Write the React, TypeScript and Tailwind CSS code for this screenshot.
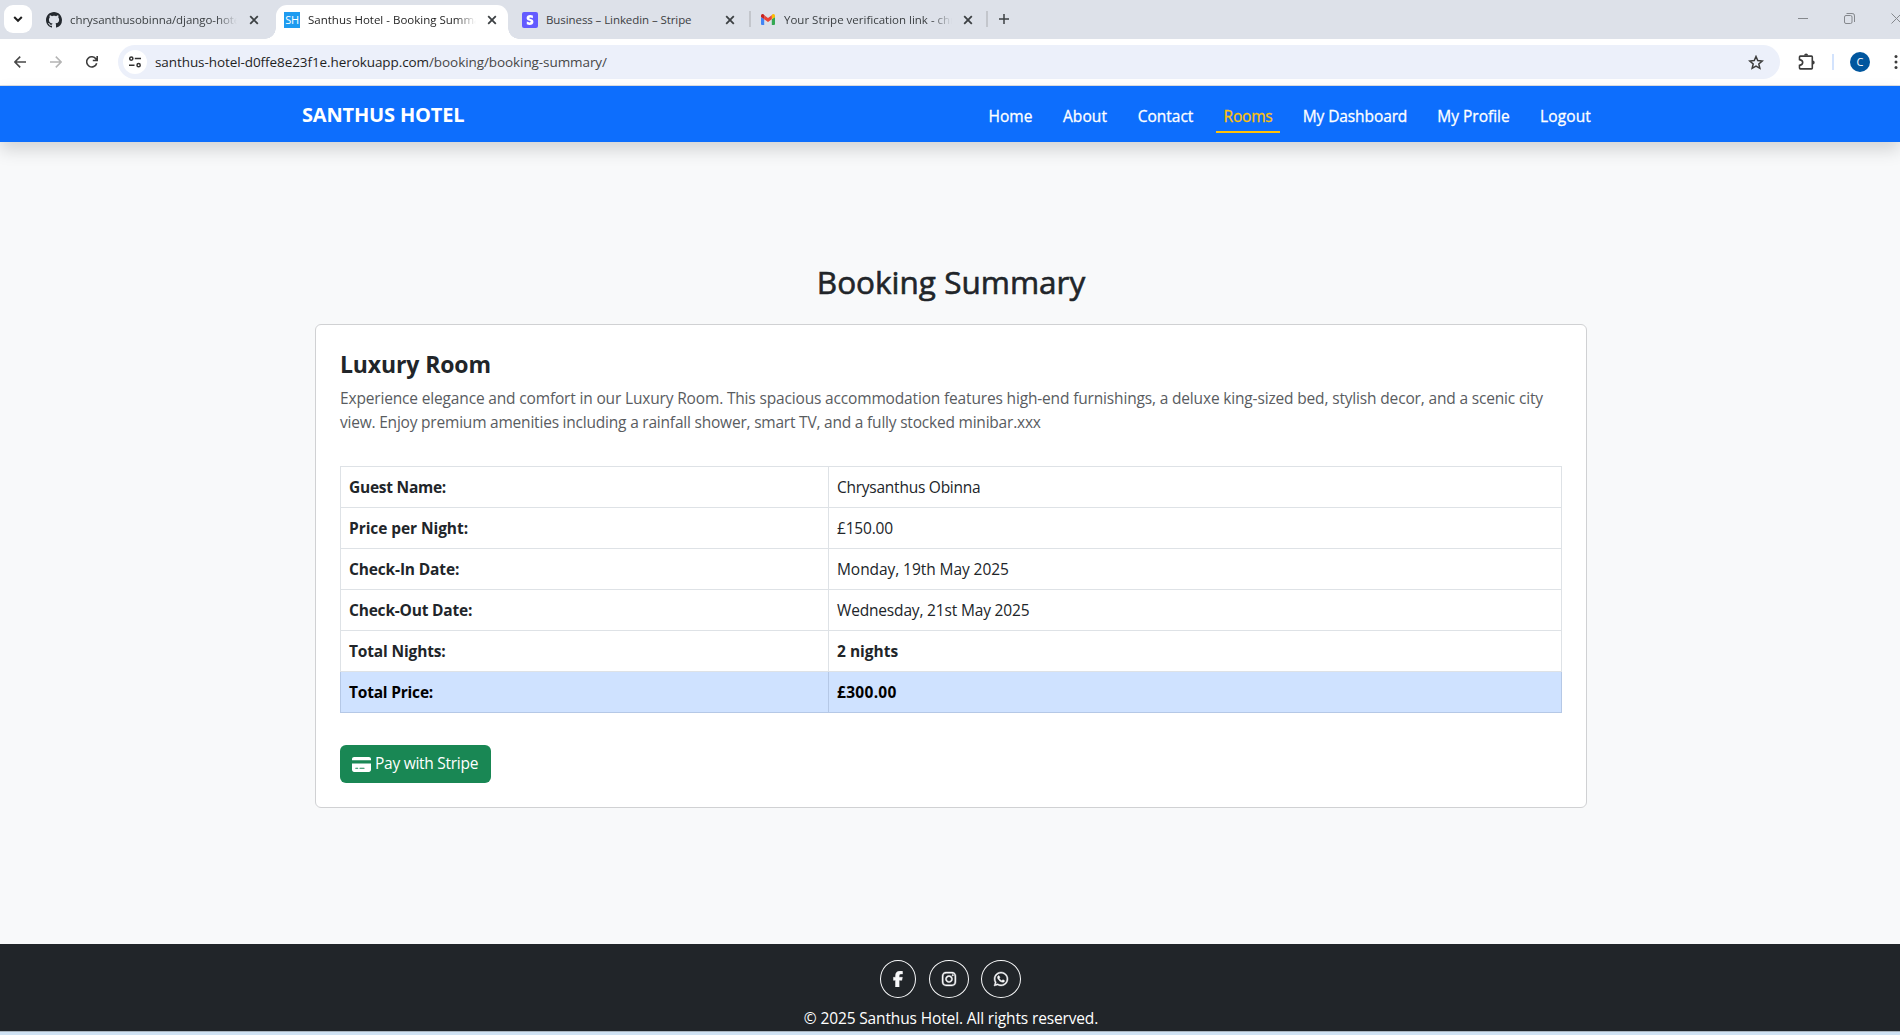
import type { ReactNode } from "react";
import { FaCreditCard, FaFacebookF, FaInstagram, FaWhatsapp } from "react-icons/fa6";

function CloseIcon() {
  return (
    <svg className="h-2.5 w-2.5 shrink-0" viewBox="0 0 10 10" fill="none" stroke="#3c4043" strokeWidth="1.8">
      <path d="M1.2 1.2 8.8 8.8M8.8 1.2 1.2 8.8" />
    </svg>
  );
}

function Tab({ icon, title, className, textClass, fade }: { icon: ReactNode; title: string; className: string; textClass: string; fade: string }) {
  return (
    <div className={`flex shrink-0 items-center ${className}`}>
      {icon}
      <div className={`h-5 overflow-hidden text-[11.5px] leading-5 whitespace-nowrap ${textClass} ${fade}`}>{title}</div>
      <CloseIcon />
    </div>
  );
}

const FADE = "[mask-image:linear-gradient(to_right,black_88%,transparent)]";

function GithubIcon() {
  return (
    <svg className="h-4 w-4 shrink-0" viewBox="0 0 16 16" fill="#24292f">
      <path d="M8 0C3.58 0 0 3.58 0 8c0 3.54 2.29 6.53 5.47 7.59.4.07.55-.17.55-.38 0-.19-.01-.82-.01-1.49-2.01.37-2.53-.49-2.69-.94-.09-.23-.48-.94-.82-1.13-.28-.15-.68-.52-.01-.53.63-.01 1.08.58 1.23.82.72 1.21 1.87.87 2.33.66.07-.52.28-.87.51-1.07-1.78-.2-3.64-.89-3.64-3.95 0-.87.31-1.59.82-2.15-.08-.2-.36-1.02.08-2.12 0 0 .67-.21 2.2.82.64-.18 1.32-.27 2-.27s1.36.09 2 .27c1.53-1.04 2.2-.82 2.2-.82.44 1.1.16 1.92.08 2.12.51.56.82 1.27.82 2.15 0 3.07-1.87 3.75-3.65 3.95.29.25.54.73.54 1.48 0 1.07-.01 1.93-.01 2.2 0 .21.15.46.55.38A8.01 8.01 0 0 0 16 8c0-4.42-3.58-8-8-8z" />
    </svg>
  );
}

function StripeIcon() {
  return (
    <svg className="h-4 w-4 shrink-0" viewBox="0 0 16 16">
      <rect width="16" height="16" rx="2" fill="#635bff" />
      <path fill="#fff" d="M7.3 6.1c0-.4.35-.57.9-.57.82 0 1.85.25 2.67.7V3.5A7 7 0 0 0 8.2 3C6 3 4.6 4.15 4.6 6.05c0 2.98 4.1 2.5 4.1 3.78 0 .5-.43.65-1.02.65-.88 0-2-.37-2.9-.86v2.75c1 .42 1.98.6 2.9.6 2.2 0 3.73-1.07 3.73-3.03C11.4 6.75 7.3 7.3 7.3 6.1z" />
    </svg>
  );
}

function GmailIcon() {
  return (
    <svg className="h-[11px] w-3.5 shrink-0" viewBox="0 0 14 11">
      <path fill="#4285f4" d="M1 11h2.2V5.2L0 2.9V10a1 1 0 0 0 1 1z" />
      <path fill="#34a853" d="M10.8 11H13a1 1 0 0 0 1-1V2.9l-3.2 2.3z" />
      <path fill="#fbbc04" d="M10.8 1.2v4L14 2.9V1.6C14 .2 12.4-.5 11.3.4z" />
      <path fill="#ea4335" d="M3.2 5.2v-4L7 4.1l3.8-2.9v4L7 8.1z" />
      <path fill="#c5221f" d="M0 1.6v1.3l3.2 2.3v-4L2.7.4C1.6-.5 0 .2 0 1.6z" />
    </svg>
  );
}

function BrowserChrome() {
  return (
    <div className="shrink-0 text-[#3c4043]">
      <div className="flex h-[39px] overflow-hidden bg-[#dde1e9]">
        <div className="mt-[5px] ml-1 flex h-7 w-7 shrink-0 items-center justify-center rounded-[9px] bg-white">
          <svg className="h-2 w-2.5" viewBox="0 0 10 8" fill="none" stroke="#1f1f1f" strokeWidth="2">
            <path d="M1.2 2 5 5.8 8.8 2" />
          </svg>
        </div>
        <Tab
          icon={<GithubIcon />}
          title="chrysanthusobinna/django-hotel"
          className="w-[227px] pl-[14px]"
          textClass="mr-3 ml-2 w-[168px] tracking-[-0.06px]"
          fade={FADE}
        />
        <div className="relative mt-[5px] ml-[17px] flex h-[34px] w-[232px] shrink-0 items-center rounded-t-[11px] bg-white text-[#1f1f1f]">
          <span className="absolute bottom-0 -left-[11px] h-[11px] w-[11px] bg-[radial-gradient(circle_at_0_0,transparent_10.5px,white_11px)]" />
          <span className="absolute -right-[11px] bottom-0 h-[11px] w-[11px] bg-[radial-gradient(circle_at_100%_0,transparent_10.5px,white_11px)]" />
          <Tab
            icon={<span className="flex h-4 w-4 shrink-0 items-center justify-center bg-[#1e9bf0] text-[11px] leading-4 tracking-[-0.3px] text-white">SH</span>}
            title="Santhus Hotel - Booking Summary"
            className="-mt-[5px] pl-2"
            textClass="mr-[11px] ml-2 w-[168px]"
            fade={FADE}
          />
        </div>
        <Tab
          icon={<StripeIcon />}
          title="Business – Linkedin – Stripe"
          className="w-[241px] pl-[14px]"
          textClass="mr-[11px] ml-2 w-[168px] tracking-[-0.08px]"
          fade=""
        />
        <div className="mt-[11px] h-4 w-0.5 shrink-0 bg-[#c3c6cc]" />
        <Tab
          icon={<GmailIcon />}
          title="Your Stripe verification link - chrysanthus"
          className="w-[235px] pl-[10px]"
          textClass="mr-[11px] ml-[9px] w-[168px]"
          fade={FADE}
        />
        <div className="mt-[11px] h-4 w-0.5 shrink-0 bg-[#c3c6cc]" />
        <svg className="mt-3.5 ml-[11px] h-2.5 w-2.5 shrink-0" viewBox="0 0 10 10" fill="none" stroke="#3c4043" strokeWidth="1.5">
          <path d="M5 0v10M0 5h10" />
        </svg>
        <div className="mt-[13px] -mr-0.5 ml-auto flex gap-9 text-[#85888d]">
          <svg className="h-[11px] w-2.5" viewBox="0 0 10 11" stroke="currentColor">
            <path d="M0 5.5h10" />
          </svg>
          <svg className="h-[11px] w-[11px]" viewBox="0 0 11 11" fill="none" stroke="currentColor">
            <rect x=".5" y="2.5" width="7.5" height="8" rx="1.5" />
            <path d="M2.5.5H8A2.3 2.3 0 0 1 10.5 3v6" />
          </svg>
          <svg className="h-[11px] w-[11px]" viewBox="0 0 11 11" fill="none" stroke="currentColor">
            <path d="m.5.5 10 10m0-10-10 10" />
          </svg>
        </div>
      </div>

      <div className="flex h-[47px] items-center overflow-hidden border-b border-[#dcdfe4] bg-white">
        <svg className="ml-3.5 h-3 w-3 shrink-0" viewBox="0 0 12 12" fill="none" stroke="#474747" strokeWidth="1.6">
          <path d="M6.2.6.9 6l5.3 5.4M1 6h11" />
        </svg>
        <svg className="ml-6 h-3 w-3 shrink-0" viewBox="0 0 12 12" fill="none" stroke="#b4b4b4" strokeWidth="1.5">
          <path d="M5.8.6 11.1 6l-5.3 5.4M11 6H0" />
        </svg>
        <svg className="ml-6 h-3 w-3 shrink-0" viewBox="0 0 12 12" fill="none" stroke="#3c3c3c" strokeWidth="1.6">
          <path d="M10.7 7.2A5.1 5.1 0 1 1 10 3l1 1.3M11.2 0v4.500H6.8" />
        </svg>
        <div className="ml-5 flex h-[34px] w-[1662px] shrink-0 items-center rounded-full bg-[#ecf0fa] pl-[5px]">
          <div className="flex h-6 w-6 shrink-0 items-center justify-center rounded-full bg-white">
            <svg className="h-3 w-3" viewBox="0 0 12 12" fill="none" stroke="#303030" strokeWidth="1.5">
              <circle cx="2.3" cy="2.6" r="1.6" />
              <path d="M5.8 2.6H12M0 9.2h5.5" />
              <circle cx="9.6" cy="9.2" r="1.6" />
            </svg>
          </div>
          <div className="ml-2 text-[13.5px] tracking-[-0.08px] whitespace-nowrap text-[#1f1f1f]">
            santhus-hotel-d0ffe8e23f1e.herokuapp.com<span className="text-[#474747]">/booking/booking-summary/</span>
          </div>
          <svg className="mr-4 ml-auto h-[15px] w-4 shrink-0" viewBox="0 0 16 15" fill="none" stroke="#3c3c3c" strokeWidth="1.5">
            <path d="m8 1.5 1.75 4.1 4.45.4-3.4 2.9 1.05 4.4L8 11l-3.85 2.3L5.2 8.900 1.8 6l4.45-.4z" />
          </svg>
        </div>
        <svg className="-mt-0.5 ml-[18px] h-[17px] w-[18px] shrink-0" viewBox="0 0 18 17" fill="none" stroke="#3c3c3c" strokeWidth="1.6">
          <path d="M2.3 3.1h11.2q.8 0 .8.8v11.2q0 .8-.8.8H2.3q-.8 0-.8-.8v-2.700c2.2-.4 3.2-1.2 3.2-2.900S3.7 7 1.5 6.6V3.9q0-.8.8-.8z" />
          <path d="M6.1 2.6a2 2 0 0 1 4 0zM14.7 7.5a2 2 0 0 1 0 4z" fill="#3c3c3c" stroke="none" />
        </svg>
        <div className="ml-4 h-4 w-0.5 shrink-0 bg-[#d3e3fd]" />
        <div className="ml-4 flex h-5 w-5 shrink-0 items-center justify-center rounded-full bg-[#00569e] text-[11px] text-white">C</div>
        <svg className="ml-6 h-3.5 w-1 shrink-0" viewBox="0 0 4 14" fill="#3c3c3c">
          <circle cx="2" cy="1.6" r="1.5" />
          <circle cx="2" cy="7" r="1.5" />
          <circle cx="2" cy="12.4" r="1.5" />
        </svg>
      </div>
    </div>
  );
}

const NAV = [
  { label: "Home", className: "w-[57px] border-transparent text-white" },
  { label: "About", className: "w-[60px] border-transparent text-white tracking-[0.1px]" },
  { label: "Contact", className: "w-[69px] border-transparent text-white" },
  { label: "Rooms", className: "w-16 border-[#ffc107] text-[#ffc107] tracking-[-0.2px]" },
  { label: "My Dashboard", className: "w-[118px] border-transparent text-white tracking-[-0.1px]" },
  { label: "My Profile", className: "w-[87px] border-transparent text-white" },
  { label: "Logout", className: "w-[65px] border-transparent text-white tracking-[0.1px]" },
];

const ROWS = [
  { label: "Guest Name:", value: "Chrysanthus Obinna", l: "tracking-[-0.25px]", v: "tracking-[-0.25px]" },
  { label: "Price per Night:", value: "£150.00", l: "tracking-[-0.07px]", v: "tracking-[-0.2px]" },
  { label: "Check-In Date:", value: "Monday, 19th May 2025", l: "tracking-[-0.15px]", v: "tracking-[-0.07px]" },
  { label: "Check-Out Date:", value: "Wednesday, 21st May 2025", l: "tracking-[-0.2px]", v: "tracking-[-0.17px]" },
  { label: "Total Nights:", value: "2 nights", l: "tracking-[-0.15px]", v: "font-bold" },
];

function Social({ className, children }: { className: string; children: ReactNode }) {
  return (
    <a className={`flex h-[38px] items-center justify-center rounded-[50%] border border-[#f8f9fa] text-[#f8f9fa] ${className}`}>{children}</a>
  );
}

export default function App() {
  return (
    <div className="flex h-[1035px] w-[1900px] flex-col overflow-hidden bg-[#f8f9fa] font-['Open_Sans',sans-serif] text-[#212529]">
      <BrowserChrome />

      <nav className="h-14 shrink-0 bg-[#0d6efd] shadow-[0_8px_16px_rgba(0,0,0,0.15)]">
        <div className="mx-auto flex w-[1296px] justify-between">
          <a className="mt-[14px] text-[20px] leading-[30px] font-bold tracking-[-0.17px] text-white">SANTHUS HOTEL</a>
          <div className="mt-2 flex gap-4">
            {NAV.map((n) => (
              <a
                key={n.label}
                className={`flex h-[39px] items-center justify-center border-b-2 pt-1.5 text-[15.5px] leading-6 whitespace-nowrap [-webkit-text-stroke:0.3px] ${n.className}`}
              >
                {n.label}
              </a>
            ))}
          </div>
        </div>
      </nav>

      <main className="flex flex-1 flex-col items-center pl-0.5">
        <h1 className="mt-[121px] text-[31.5px] leading-[38px] [-webkit-text-stroke:0.6px]">Booking Summary</h1>
        <section className="mt-[23px] h-[484px] w-[1272px] rounded-md border border-[#d0d1d3] bg-white px-6 pt-[23px]">
          <h2 className="text-[23px] leading-[32px] font-bold tracking-[-0.12px]">Luxury Room</h2>
          <p className="mt-1.5 text-[15.5px] leading-6 whitespace-nowrap text-[#595c5f]">
            <span className="block tracking-[-0.162px]">
              Experience elegance and comfort in our Luxury Room. This spacious accommodation features high-end furnishings, a deluxe king-sized bed, stylish decor, and a scenic city
            </span>
            <span className="block tracking-[-0.21px]">
              view. Enjoy premium amenities including a rainfall shower, smart TV, and a fully stocked minibar.xxx
            </span>
          </p>
          <table className="mt-8 w-[1222px] table-fixed border-collapse text-left text-[15.5px] leading-6">
            <colgroup>
              <col className="w-[488px]" />
              <col />
            </colgroup>
            <tbody>
              {ROWS.map((r) => (
                <tr key={r.label} className="h-[41px]">
                  <th className={`border border-[#dee2e6] px-2 py-0 font-bold ${r.l}`}>{r.label}</th>
                  <td className={`border border-[#dee2e6] px-2 py-0 ${r.v}`}>{r.value}</td>
                </tr>
              ))}
              <tr className="h-[41px] bg-[#cfe2ff] font-bold text-black">
                <th className="border border-t-[#dee2e6] border-r-[#b5c8e6] border-b-[#b5c8e6] border-l-[#b5c8e6] px-2 py-0 tracking-[-0.2px]">Total Price:</th>
                <td className="border border-t-[#dee2e6] border-r-[#b5c8e6] border-b-[#b5c8e6] border-l-[#b5c8e6] px-2 py-0 tracking-[0.3px]">£300.00</td>
              </tr>
            </tbody>
          </table>
          <button className="mt-8 flex h-[38px] w-[151px] items-center rounded-md bg-[#198754] pl-3 text-[15.5px] tracking-[-0.27px] whitespace-nowrap text-white">
            <FaCreditCard className="mr-1 h-[17px] w-[19px] shrink-0" />
            Pay with Stripe
          </button>
        </section>
      </main>

      <footer className="flex h-[87px] shrink-0 flex-col items-center bg-[#212529] pt-4">
        <div className="flex">
          <Social className="w-9">
            <FaFacebookF className="h-4 w-2.5" strokeWidth={14} />
          </Social>
          <Social className="ml-[13px] w-10">
            <FaInstagram className="h-4 w-4" strokeWidth={14} />
          </Social>
          <Social className="ml-3 w-10">
            <FaWhatsapp className="h-4 w-4" strokeWidth={14} />
          </Social>
        </div>
        <p className="mt-2 pl-0.5 text-[15.5px] leading-6 tracking-[-0.14px] text-white">© 2025 Santhus Hotel. All rights reserved.</p>
      </footer>
      <div className="h-1 shrink-0 border-t border-[#a9b4be] bg-[#cfe2f3]" />
    </div>
  );
}
